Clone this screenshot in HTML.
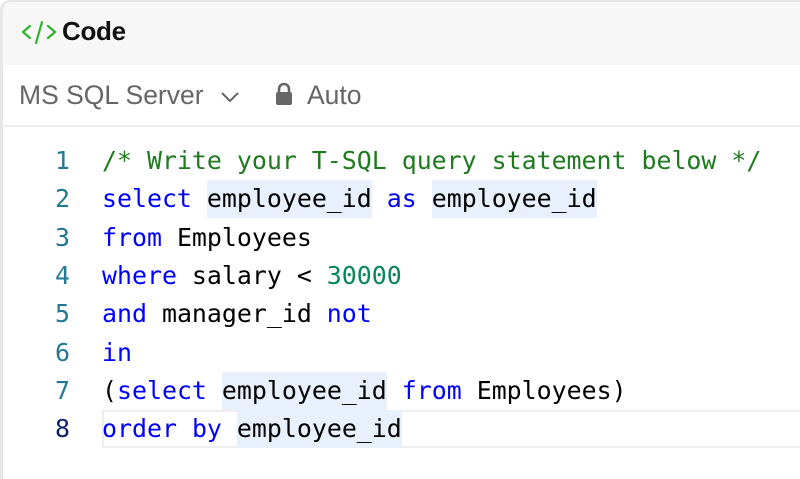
<!DOCTYPE html>
<html><head><meta charset="utf-8"><style>
html,body{margin:0;padding:0;width:800px;height:479px;overflow:hidden;background:#fff;}
body{position:relative;font-family:"Liberation Sans",sans-serif;}
.frame{position:absolute;left:0;top:0;width:800px;height:479px;border-left:3px solid #e6e6e6;border-top:2px solid #e6e6e6;border-top-left-radius:10px;box-sizing:border-box;}
.top{position:absolute;left:3px;top:2px;width:797px;height:63px;background:#f7f7f7;border-top-left-radius:8px;}
.title{position:absolute;left:59px;top:14px;font-size:26px;color:#111;font-weight:bold;letter-spacing:-0.3px;}
.bar{position:absolute;left:3px;top:65px;width:797px;height:60px;border-bottom:2px solid #ececec;}
.lang{position:absolute;left:16px;top:15px;font-size:26.5px;color:#666;}
.auto{position:absolute;left:304px;top:15px;font-size:26.5px;color:#666;}
.code{position:absolute;left:0;top:142px;font-family:"DejaVu Sans Mono",monospace;font-size:24.9px;}
.ln{position:absolute;height:38.3px;line-height:38.3px;white-space:pre;}
.num{width:70px;text-align:right;color:#237893;left:0;}
.txt{left:102px;color:#000;}
.k{color:#0000ff}.c{color:#1f7a1f}.n{color:#098658}
.h{background:#e8f0fc;display:inline-block;height:38px;}
.cur{position:absolute;left:102px;top:410px;width:700px;height:38px;border:2px solid #eeeeee;border-right:none;box-sizing:border-box;}
</style></head><body>
<div class="frame"></div>
<div class="top">
<svg style="position:absolute;left:18px;top:17px" width="36" height="26" viewBox="0 0 36 26"><path d="M9 7 L2 13 L9 19 M27 7 L34 13 L27 19 M21 3 L15 24" stroke="#2db22d" stroke-width="2.2" fill="none" stroke-linecap="round" stroke-linejoin="round"/></svg>
<div class="title">Code</div>
</div>
<div class="bar">
<div class="lang">MS SQL Server</div>
<svg style="position:absolute;left:216px;top:25px" width="22" height="14" viewBox="0 0 22 14"><path d="M3 3 L11 11 L19 3" stroke="#666" stroke-width="2" fill="none"/></svg>
<svg style="position:absolute;left:272px;top:17px" width="18" height="24" viewBox="0 0 18 24"><path d="M4 11 V7 a5 5 0 0 1 10 0 V11" stroke="#666" stroke-width="2.6" fill="none"/><rect x="1" y="10" width="16" height="13" rx="2" fill="#666"/></svg>
<div class="auto">Auto</div>
</div>
<div class="cur"></div>
<div class="code">
<div class="ln num" style="top:0">1</div><div class="ln txt c" style="top:0">/* Write your T-SQL query statement below */</div>
<div class="ln num" style="top:38.3px">2</div><div class="ln txt" style="top:38.3px"><span class="k">select</span> <span class="h">employee_id</span> <span class="k">as</span> <span class="h">employee_id</span></div>
<div class="ln num" style="top:76.6px">3</div><div class="ln txt" style="top:76.6px"><span class="k">from</span> Employees</div>
<div class="ln num" style="top:114.9px">4</div><div class="ln txt" style="top:114.9px"><span class="k">where</span> salary &lt; <span class="n">30000</span></div>
<div class="ln num" style="top:153.2px">5</div><div class="ln txt" style="top:153.2px"><span class="k">and</span> manager_id <span class="k">not</span></div>
<div class="ln num" style="top:191.5px">6</div><div class="ln txt" style="top:191.5px"><span class="k">in</span></div>
<div class="ln num" style="top:229.8px">7</div><div class="ln txt" style="top:229.8px">(<span class="k">select</span> <span class="h">employee_id</span> <span class="k">from</span> Employees)</div>
<div class="ln num" style="top:268.1px;color:#0b216f">8</div><div class="ln txt" style="top:268.1px"><span class="k">order</span> <span class="k">by</span> <span class="h">employee_id</span></div>
</div>
</body></html>
